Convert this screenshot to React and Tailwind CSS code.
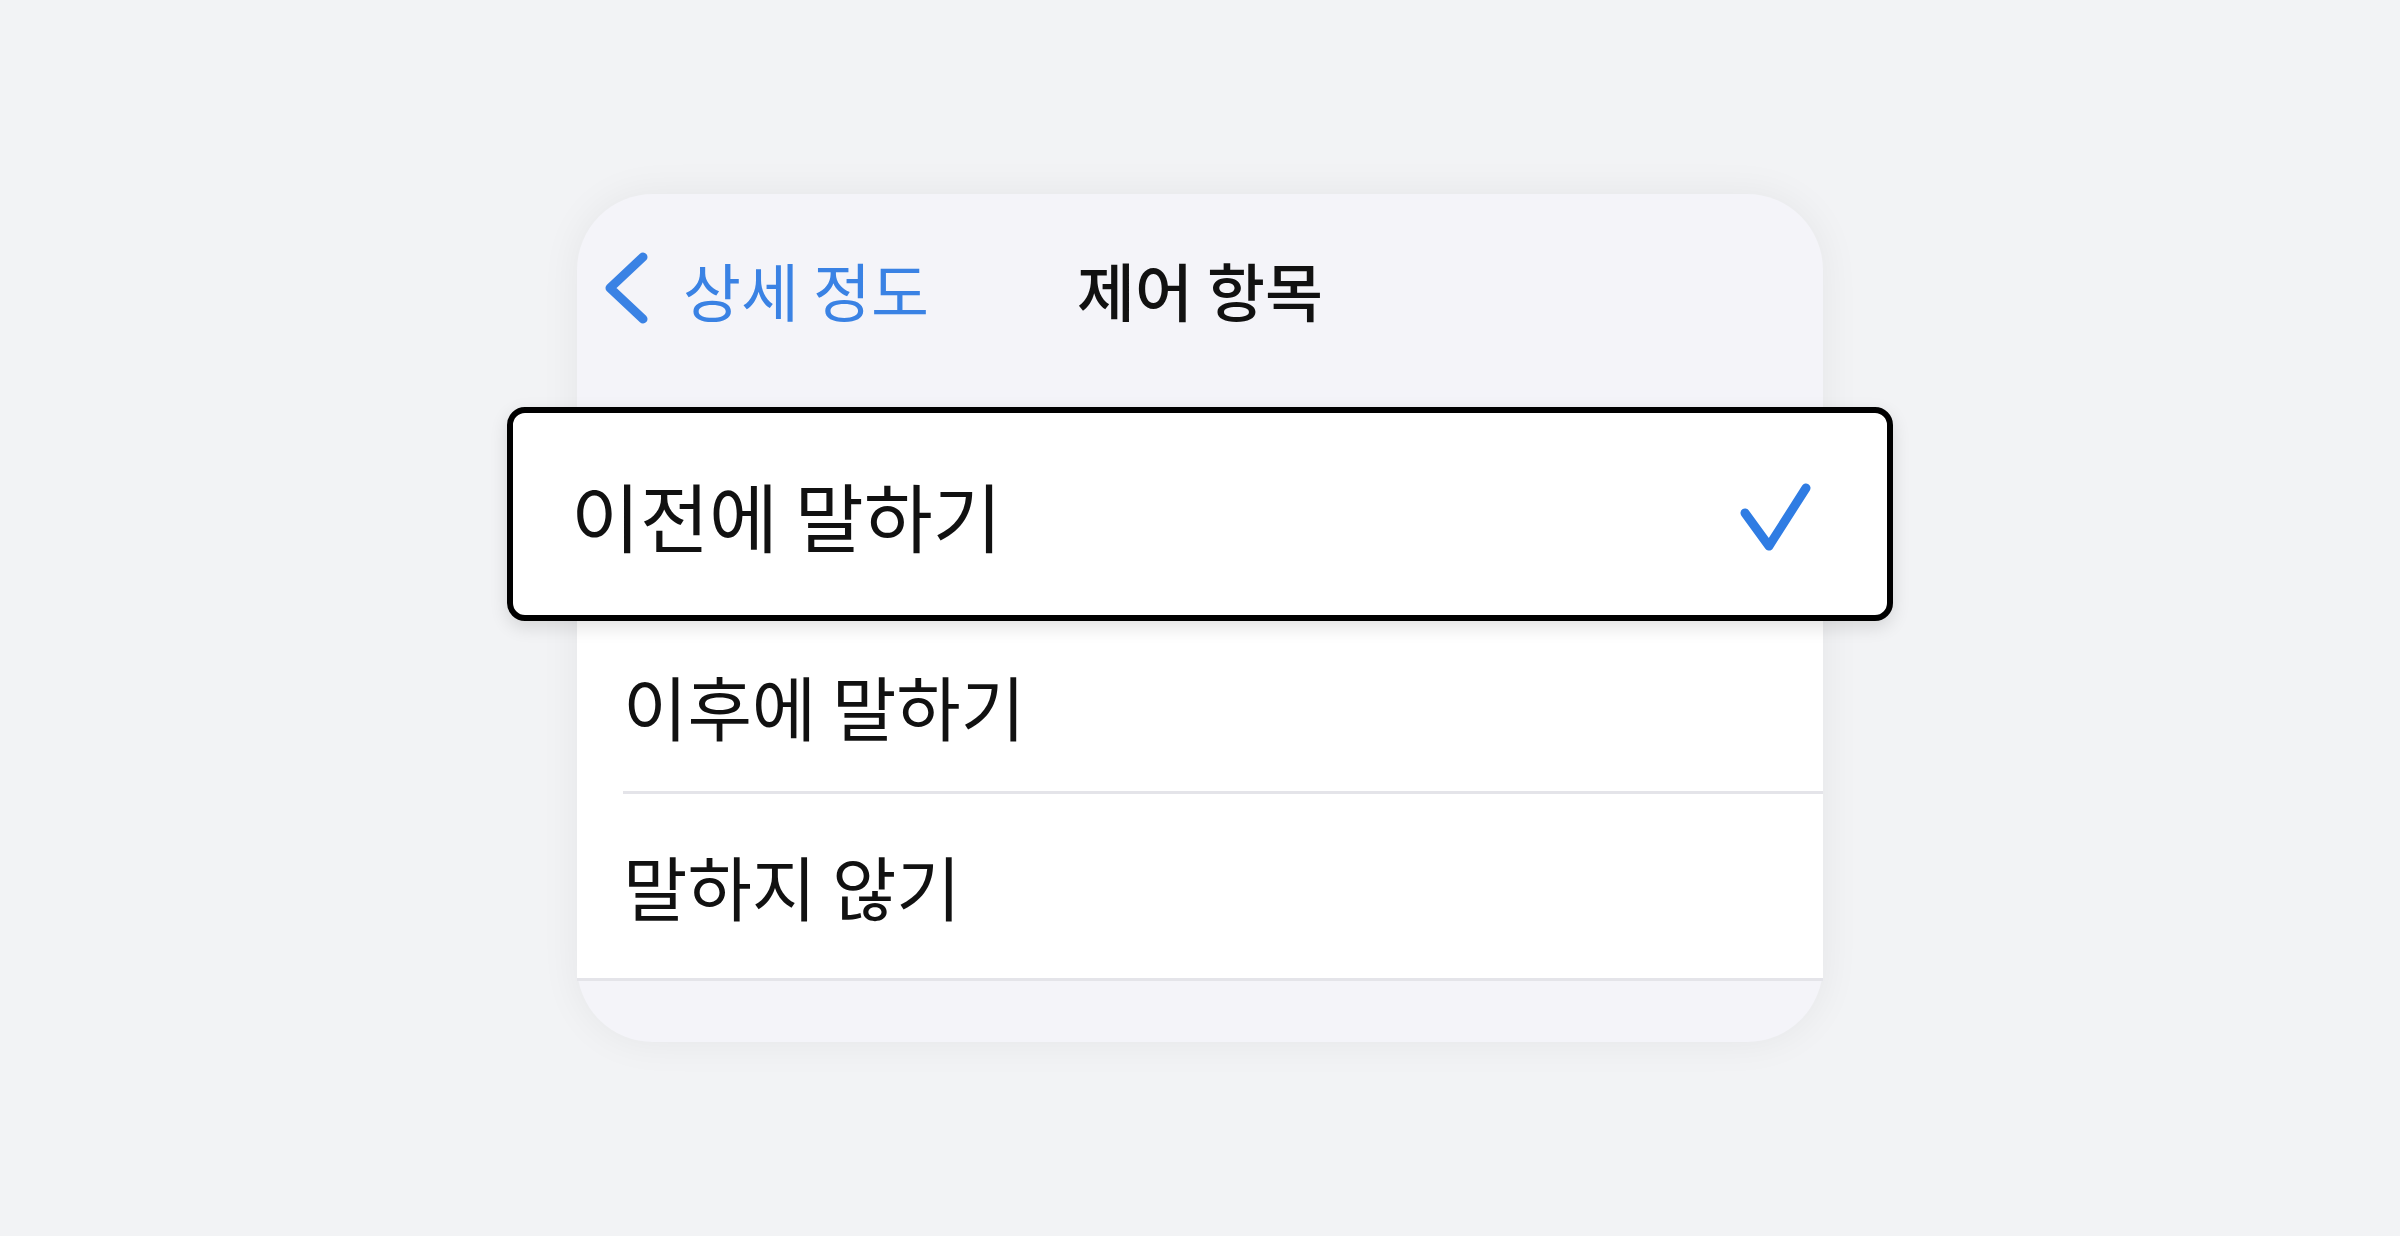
import React from 'react';

const Chevron = () => (
  <svg width="46" height="72" viewBox="0 0 46 72" fill="none" className="shrink-0">
    <path d="M40 5 L7 36 L40 67" stroke="currentColor" strokeWidth="9" strokeLinecap="round" strokeLinejoin="round" />
  </svg>
);

const Check = () => (
  <svg width="76" height="74" viewBox="0 0 76 74" fill="none" className="shrink-0 mt-[6px]">
    <path d="M9 33 L33 66 L70 8" stroke="#2f7ce3" strokeWidth="9" strokeLinecap="round" strokeLinejoin="round" />
  </svg>
);

export default function App() {
  return (
    <div className="min-h-screen w-full bg-[#f2f3f5] flex items-center justify-center font-['Noto_Sans_CJK_KR',sans-serif]">
      <div className="w-[1246px] h-[848px] rounded-[76px] bg-[#f4f4f9] shadow-[0_0_40px_rgba(0,0,0,0.06)] flex flex-col">
        {/* nav bar */}
        <div className="h-[188px] grid grid-cols-[1fr_auto_1fr] items-center px-[26px]">
          <div className="flex items-center gap-[34px] text-[#3a82e4]">
            <Chevron />
            <span className="text-[63px] leading-none">상세 정도</span>
          </div>
          <span className="text-[63px] leading-none font-medium text-[#111111]">제어 항목</span>
          <div />
        </div>
        <div className="h-[25px]" />

        {/* options */}
        <div className="bg-white">
          <div className="relative z-10 -mx-[70px] h-[214px] border-[6px] border-black rounded-[18px] bg-white shadow-[0_6px_18px_rgba(0,0,0,0.12)] flex items-center justify-between pl-[58px] pr-[75px]">
            <span className="text-[75px] leading-none text-[#111111]">이전에 말하기</span>
            <Check />
          </div>
          <div className="pl-[46px]">
            <div className="h-[173px] flex items-center border-b-[3px] border-[#e4e4e9]">
              <span className="text-[70px] leading-none text-[#111111]">이후에 말하기</span>
            </div>
          </div>
          <div className="h-[187px] flex items-center pl-[46px] border-b-[3px] border-[#e4e4e9]">
            <span className="text-[70px] leading-none text-[#111111]">말하지 않기</span>
          </div>
        </div>
      </div>
    </div>
  );
}
